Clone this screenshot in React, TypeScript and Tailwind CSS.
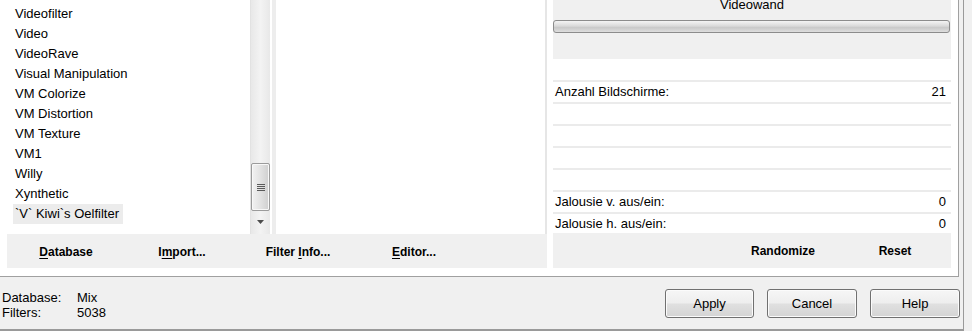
const filters = [
  "Videofilter",
  "Video",
  "VideoRave",
  "Visual Manipulation",
  "VM Colorize",
  "VM Distortion",
  "VM Texture",
  "VM1",
  "Willy",
  "Xynthetic",
  "`V` Kiwi`s Oelfilter",
];

const selected = "`V` Kiwi`s Oelfilter";

// label with an underlined access key
function AccessLabel({ before, hot, after }: { before: string; hot: string; after: string }) {
  return (
    <span className="text-[12px] font-bold text-black">
      {before}
      <span className="underline underline-offset-2">{hot}</span>
      {after}
    </span>
  );
}

function ScrollBar() {
  return (
    <div className="flex h-full w-[20px] flex-col border-l border-[#e2e2e2] bg-[linear-gradient(to_right,#e8e8e8,#f3f3f3_50%,#e8e8e8)]">
      <div className="h-[163px]" />
      <div className="mx-auto flex h-[48px] w-[19px] flex-col items-center justify-center gap-[1px] rounded-[2px] border border-[#9b9b9b] bg-[linear-gradient(to_right,#f2f2f2,#e2e2e2_50%,#cfcfcf)] shadow-[inset_0_0_0_1px_#f8f8f8]">
        <div className="h-[1px] w-[8px] bg-[#5a5a5a]" />
        <div className="h-[1px] w-[8px] bg-[#5a5a5a]" />
        <div className="h-[1px] w-[8px] bg-[#5a5a5a]" />
        <div className="h-[1px] w-[8px] bg-[#5a5a5a]" />
      </div>
      <div className="flex h-[22px] items-center justify-center">
        <svg width="7" height="4" viewBox="0 0 7 4">
          <polygon points="0,0 7,0 3.5,4" fill="#4d4d4d" />
        </svg>
      </div>
    </div>
  );
}

function ParamRow({ label, value }: { label?: string; value?: string }) {
  return (
    <div className="flex h-[22px] items-center justify-between border-t-2 border-[#ebebeb] bg-white pl-[2px] pr-[5px] text-[13px] text-black">
      <span>{label}</span>
      <span>{value}</span>
    </div>
  );
}

function WinButton({ label, width }: { label: string; width: string }) {
  return (
    <button
      className={`${width} h-[29px] rounded-[3px] border border-[#707070] bg-[linear-gradient(to_bottom,#f6f6f6_0%,#eeeeee_48%,#e0e0e0_52%,#d4d4d4_100%)] text-[13px] text-black shadow-[inset_0_0_0_1px_#fbfbfb]`}
    >
      {label}
    </button>
  );
}

export default function App() {
  return (
    <div className="h-[331px] w-[972px] overflow-hidden bg-[#f0f0f0] font-['Liberation_Sans',Arial,sans-serif]">
      <div className="flex h-[331px] w-[964px] flex-col border-b-2 border-r border-[#9a9a9a]">
        {/* main area */}
        <div className="flex h-[277px] w-[959px] border-b border-r border-[#a0a0a0] bg-white">
          {/* left + middle */}
          <div className="flex w-[547px] flex-col">
            <div className="flex h-[234px]">
              <div className="w-[250px] pt-[4px]">
                {filters.map((f) => (
                  <div key={f} className="h-[20px] pl-[13px] text-[13px] leading-[20px] text-black">
                    <span className={f === selected ? "inline-block bg-[#ececec] px-[2px] pr-[4px]" : "inline-block px-[2px]"}>
                      {f}
                    </span>
                  </div>
                ))}
              </div>
              <ScrollBar />
              <div className="w-[6px] border-l-2 border-white bg-[#ededed]" />
              <div className="w-[269px] bg-white" />
              <div className="w-[2px] bg-[#e6e6e6]" />
            </div>
            <div className="ml-[7px] flex h-[34px] items-center bg-[#f0f0f0] pl-[1px]">
              <div className="w-[116px] text-center">
                <AccessLabel before="" hot="D" after="atabase" />
              </div>
              <div className="w-[116px] text-center">
                <AccessLabel before="I" hot="m" after="port..." />
              </div>
              <div className="w-[116px] text-center">
                <AccessLabel before="Filter " hot="I" after="nfo..." />
              </div>
              <div className="w-[116px] text-center">
                <AccessLabel before="" hot="E" after="ditor..." />
              </div>
            </div>
          </div>

          <div className="w-[6px]" />

          {/* parameter panel */}
          <div className="flex w-[398px] flex-col">
            <div className="flex h-[59px] flex-col overflow-hidden bg-[#f0f0f0]">
              <div className="-mt-[3px] h-[16px] text-center text-[13px] leading-[16px] text-black">Videowand</div>
              <div className="mt-[7px] h-[13px] w-[397px] rounded-[3px] border border-[#8c8c8c] bg-[linear-gradient(to_bottom,#f4f4f4_0%,#dadada_45%,#c9c9c9_60%,#dedede_100%)]" />
            </div>
            <div className="h-[21px] bg-white" />
            <ParamRow label="Anzahl Bildschirme:" value="21" />
            <ParamRow />
            <ParamRow />
            <ParamRow />
            <ParamRow />
            <ParamRow label="Jalousie v. aus/ein:" value="0" />
            <div className="flex h-[21px] items-center justify-between border-t-2 border-[#ebebeb] bg-white pl-[2px] pr-[5px] text-[13px] text-black">
              <span>Jalousie h. aus/ein:</span>
              <span>0</span>
            </div>
            <div className="flex h-[35px] items-center justify-end bg-[#f0f0f0]">
              <div className="w-[112px] text-center text-[12px] font-bold text-black">Randomize</div>
              <div className="w-[112px] text-center text-[12px] font-bold text-black">Reset</div>
            </div>
          </div>
        </div>

        {/* status bar */}
        <div className="flex h-[52px] items-start justify-between">
          <div className="grid grid-cols-[75px_auto] pl-[2px] pt-[13px] text-[13px] leading-[15px] text-black">
            <span>Database:</span>
            <span>Mix</span>
            <span>Filters:</span>
            <span>5038</span>
          </div>
          <div className="flex gap-[13px] pr-[3px] pt-[12px]">
            <WinButton label="Apply" width="w-[89px]" />
            <WinButton label="Cancel" width="w-[90px]" />
            <WinButton label="Help" width="w-[90px]" />
          </div>
        </div>
      </div>
    </div>
  );
}
